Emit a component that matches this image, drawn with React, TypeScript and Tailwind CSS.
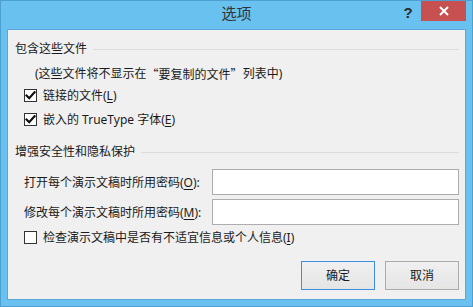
import React from "react";

const font = { fontFamily: '"Noto Sans", "Noto Sans CJK SC", sans-serif' };

function Check({ checked }: { checked: boolean }) {
  return (
    <div className="w-[13px] h-[13px] border border-[#333333] bg-white flex items-center justify-center shrink-0">
      {checked && (
        <svg width="11" height="11" viewBox="0 0 11 11">
          <path d="M1.5 5.5 L4.2 8.2 L9.5 2.2" stroke="#111111" strokeWidth="2.2" fill="none" strokeLinecap="square" />
        </svg>
      )}
    </div>
  );
}

function U({ c }: { c: string }) {
  return <span className="underline underline-offset-2">{c}</span>;
}

export default function App() {
  return (
    <div className="w-[473px] h-[307px] bg-[#68c1ef] border border-[#4d9fd2] flex flex-col text-[12px] text-[#1a1a1a] leading-[16px]" style={font}>
      <div className="h-[28px] relative shrink-0 flex items-start justify-center">
        <div className="h-[24px] flex items-center justify-center text-[15px] text-[#333333]">选项</div>
        <div className="absolute left-[401px] top-[3px] w-[12px] h-[18px] flex items-center justify-center text-[15px] font-bold text-[#2a2a2a]" style={{ fontFamily: '"Liberation Sans", sans-serif' }}>?</div>
        <div className="absolute right-[6px] top-0 w-[45px] h-[20px] bg-[#c75050] flex items-center justify-center">
          <svg width="10" height="10" viewBox="0 0 10 10">
            <path d="M1 1 L9 9 M9 1 L1 9" stroke="white" strokeWidth="2" />
          </svg>
        </div>
      </div>
      <div className="mx-[6px] mb-[6px] flex-1 border border-[#5aa6d8] bg-[#f0f0f0] flex flex-col pl-[7px] pr-[6px]">
        <div className="mt-[11px] h-[16px] flex items-center gap-[6px]">
          <span>包含这些文件</span>
          <div className="flex-1 h-px bg-[#dcdcdc]" />
        </div>
        <div className="mt-[9px] h-[16px] flex items-center pl-[20px]">
          <span>(这些文件将不显示在</span>
          <span style={{ fontFamily: '"Noto Sans CJK SC", sans-serif' }}>“要复制的文件”</span>
          <span>列表中)</span>
        </div>
        <div className="mt-[6px] h-[16px] flex items-center pl-[9px] gap-[6px]">
          <div className="-mt-[2px]"><Check checked /></div>
          <span>链接的文件(<U c="L" />)</span>
        </div>
        <div className="mt-[8px] h-[16px] flex items-center pl-[9px] gap-[6px]">
          <div className="-mt-[2px]"><Check checked /></div>
          <span>嵌入的 TrueType 字体(<U c="E" />)</span>
        </div>
        <div className="mt-[16px] h-[16px] flex items-center gap-[6px]">
          <span>增强安全性和隐私保护</span>
          <div className="flex-1 h-px bg-[#dcdcdc]" />
        </div>
        <div className="mt-[9px] h-[26px] flex items-center pl-[9px]">
          <span className="flex-1 mt-[2px]">打开每个演示文稿时所用密码(<U c="O" />):</span>
          <div className="w-[247px] h-[26px] bg-white border border-[#adadad]" />
        </div>
        <div className="mt-[4px] h-[26px] flex items-center pl-[9px]">
          <span className="flex-1 mt-[2px]">修改每个演示文稿时所用密码(<U c="M" />):</span>
          <div className="w-[247px] h-[26px] bg-white border border-[#adadad]" />
        </div>
        <div className="mt-[5px] h-[16px] flex items-center pl-[9px] gap-[6px]">
          <div className="-mt-[2px]"><Check checked={false} /></div>
          <span>检查演示文稿中是否有不适宜信息或个人信息(<U c="I" />)</span>
        </div>
        <div className="mt-[15px] flex justify-end gap-[10px]">
          <div className="w-[74px] h-[29px] border border-[#3c8fe0] bg-gradient-to-b from-[#f0f0f0] to-[#e5e5e5] flex items-center justify-center">确定</div>
          <div className="w-[74px] h-[29px] border border-[#acacac] bg-gradient-to-b from-[#f0f0f0] to-[#e5e5e5] flex items-center justify-center">取消</div>
        </div>
      </div>
    </div>
  );
}
